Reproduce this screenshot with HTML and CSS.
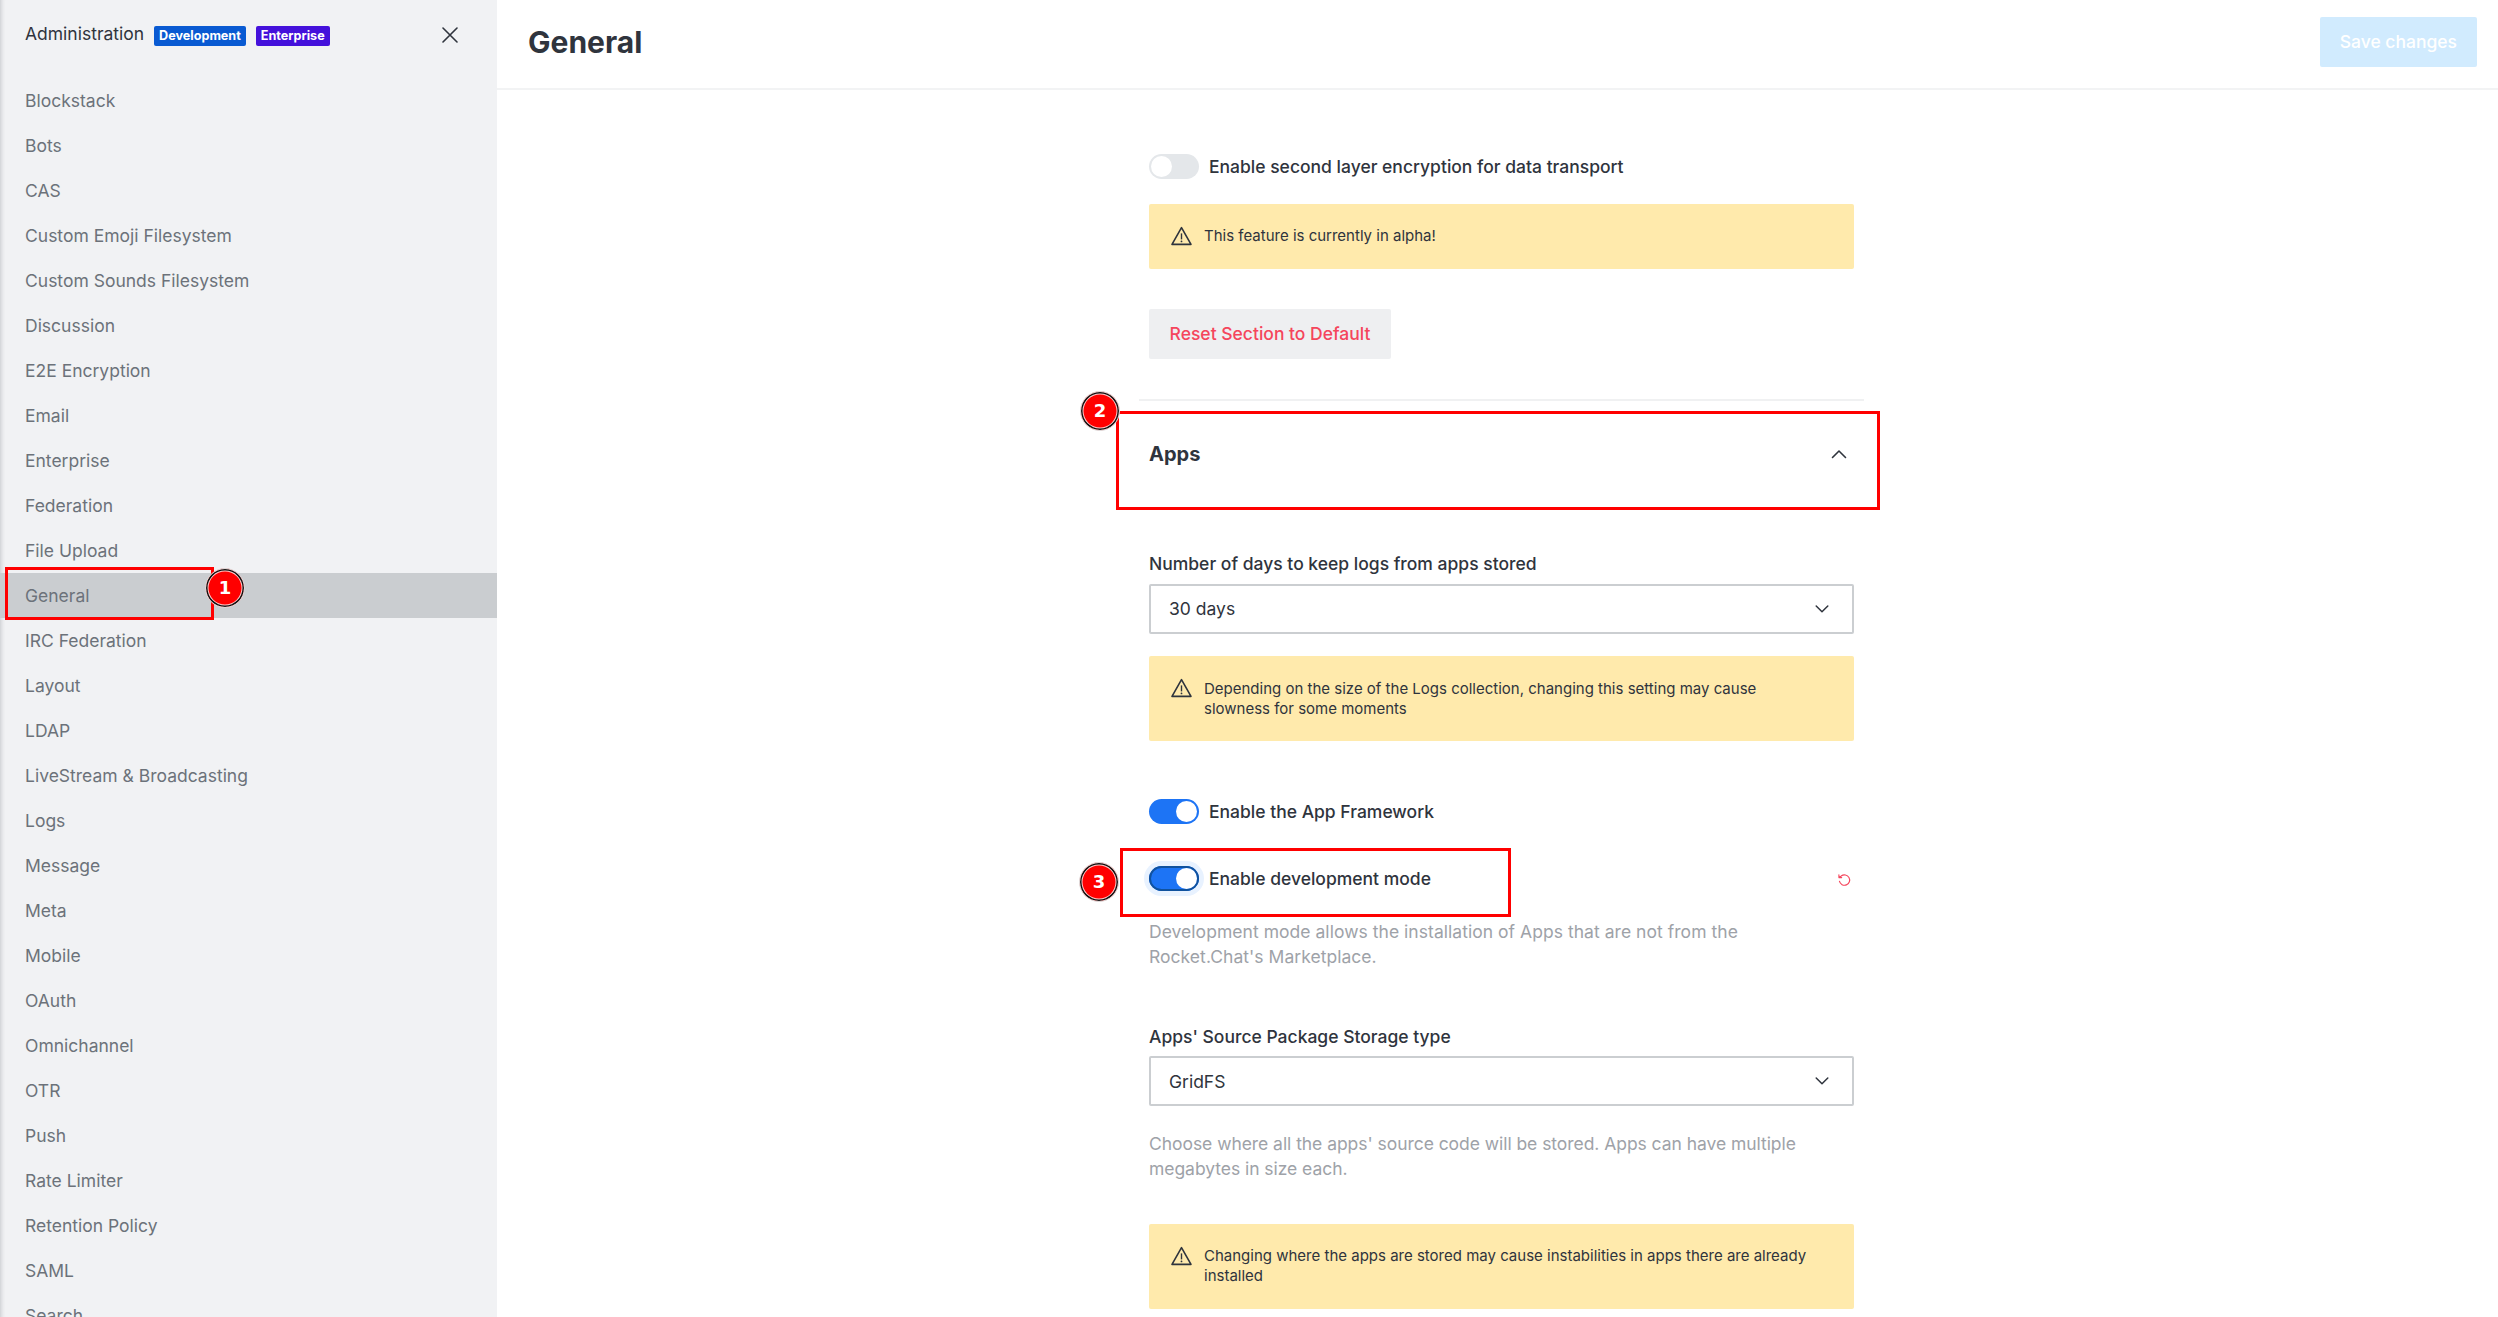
FILE: index.html
```html
<!DOCTYPE html>
<html lang="en">
<head>
<meta charset="utf-8">
<title>Administration - General</title>
<link rel="stylesheet" href="styles.css">
</head>
<body>
<svg class="defs" aria-hidden="true">
  <symbol id="warning" viewBox="0 0 25 25"><path d="M12.5 3.6 L22 20.4 H3 Z" fill="none" stroke="currentColor" stroke-width="1.6" stroke-linejoin="round"/><path d="M12.5 9.4 V15.4" fill="none" stroke="currentColor" stroke-width="1.4"/><circle cx="12.5" cy="17.4" r=".9" fill="currentColor"/></symbol>
  <symbol id="down" viewBox="0 0 16 10"><path d="M2.2 2 L8 7.8 L13.8 2" fill="none" stroke="currentColor" stroke-width="1.5" stroke-linecap="round" stroke-linejoin="round"/></symbol>
  <symbol id="up" viewBox="0 0 16 10"><path d="M1.5 8.5 L8 2 L14.5 8.5" fill="none" stroke="currentColor" stroke-width="1.6" stroke-linecap="round" stroke-linejoin="round"/></symbol>
</svg>
<div class="app">
  <aside class="sidebar">
    <header class="sidebar-head">
      <span class="sidebar-title">Administration</span>
      <span class="tag tag-dev">Development</span>
      <span class="tag tag-ent">Enterprise</span>
      <svg class="close" viewBox="0 0 16 16"><path d="M1 1 L15 15 M15 1 L1 15" fill="none" stroke="currentColor" stroke-width="1.6" stroke-linecap="round"/></svg>
    </header>
    <nav class="menu">
      <a>Blockstack</a><a>Bots</a><a>CAS</a><a>Custom Emoji Filesystem</a><a>Custom Sounds Filesystem</a><a>Discussion</a><a>E2E Encryption</a><a>Email</a><a>Enterprise</a><a>Federation</a><a>File Upload</a><a class="active">General</a><a>IRC Federation</a><a>Layout</a><a>LDAP</a><a>LiveStream &amp; Broadcasting</a><a>Logs</a><a>Message</a><a>Meta</a><a>Mobile</a><a>OAuth</a><a>Omnichannel</a><a>OTR</a><a>Push</a><a>Rate Limiter</a><a>Retention Policy</a><a>SAML</a><a>Search</a>
    </nav>
  </aside>
  <main class="main">
    <header class="page-head">
      <h1>General</h1>
      <button class="save">Save changes</button>
    </header>
    <div class="content">
      <div class="row"><span class="toggle"></span><span class="label">Enable second layer encryption for data transport</span></div>
      <div class="callout first"><svg class="warn"><use href="#warning"/></svg><p>This feature is currently in alpha!</p></div>
      <button class="reset">Reset Section to Default</button>
      <div class="section-head"><h2>Apps</h2><svg class="chevron"><use href="#up"/></svg></div>
      <div class="label">Number of days to keep logs from apps stored</div>
      <div class="select"><span>30 days</span><svg class="chevron"><use href="#down"/></svg></div>
      <div class="callout logs"><svg class="warn"><use href="#warning"/></svg><p>Depending on the size of the Logs collection, changing this setting may cause slowness for some moments</p></div>
      <div class="row framework"><span class="toggle on"></span><span class="label">Enable the App Framework</span></div>
      <div class="row devmode"><span class="toggle on focus"></span><span class="label">Enable development mode</span>
        <svg class="undo" viewBox="0 0 14 14"><path d="M1.9 1.8 V4.6 H4.7 M2.2 4.4 L4.2 3 A5.2 5.2 0 1 1 2.4 8.2" fill="none" stroke="currentColor" stroke-width="1.1" stroke-linecap="round" stroke-linejoin="round"/></svg>
      </div>
      <p class="hint">Development mode allows the installation of Apps that are not from the Rocket.Chat's Marketplace.</p>
      <div class="label storage">Apps' Source Package Storage type</div>
      <div class="select storage-select"><span>GridFS</span><svg class="chevron"><use href="#down"/></svg></div>
      <p class="hint choose">Choose where all the apps' source code will be stored. Apps can have multiple megabytes in size each.</p>
      <div class="callout last"><svg class="warn"><use href="#warning"/></svg><p>Changing where the apps are stored may cause instabilities in apps there are already installed</p></div>
    </div>
  </main>
  <div class="mark mark-1"></div><div class="pin pin-1">1</div>
  <div class="mark mark-2"></div><div class="pin pin-2">2</div>
  <div class="mark mark-3"></div><div class="pin pin-3">3</div>
</div>
</body>
</html>
```
FILE: styles.css
```css
* { box-sizing: border-box; }
body {
  margin: 0;
  font-family: Inter, "Liberation Sans", sans-serif;
  font-size: 17.5px;
  line-height: 25px;
  color: #2f343d;
  background: #fff;
}
h1, h2, p { margin: 0; }
button { font: inherit; font-weight: 500; border: 0; border-radius: 2px; height: 50px; padding: 0 20px; }
svg { display: block; flex: none; }
.defs { position: absolute; width: 0; height: 0; }
.app { position: relative; display: flex; height: 1317px; overflow: hidden; }

.sidebar { width: 497px; flex: none; background: #f1f2f4; box-shadow: inset 5px 0 4px -4px rgba(47, 52, 61, .22); }
.sidebar-head { display: flex; align-items: center; height: 78px; padding: 0 39px 8px 25px; }
.sidebar-title { margin-right: 10px; padding-bottom: 3px; }
.tag { height: 20px; margin: 2px 10px 0 0; padding: 0 5px; border-radius: 2px; font-size: 12.6px; line-height: 19px; font-weight: 700; color: #fff; }
.tag-dev { background: #095ad2; }
.tag-ent { background: #4411db; }
.close { width: 16px; height: 16px; margin-left: auto; margin-bottom: 1px; }
.menu a { display: block; height: 45px; padding: 0 25px; line-height: 45px; color: #6c727a; }
.menu .active { background: #cacdd0; }

.main { flex: 1; }
.page-head { display: flex; align-items: center; justify-content: space-between; height: 90px; padding: 0 21px 5px 31px; border-bottom: 2px solid #f2f3f4; }
h1 { font-size: 30px; line-height: 40px; font-weight: 700; }
.save { background: #d1ebfe; color: #fff; }

.content { width: 705px; margin: 64px 0 0 652px; }
.row { display: flex; align-items: center; height: 25px; gap: 10px; }
.label { font-weight: 500; }
.toggle { width: 50px; height: 25px; padding: 2px; border-radius: 13px; background: #e4e7ea; }
.toggle::before { content: ""; display: block; width: 21px; height: 21px; border-radius: 50%; background: #fff; }
.toggle.on { background: #1d74f5; }
.toggle.on::before { margin-left: auto; }
.toggle.focus { box-shadow: inset 0 0 0 2px #10529e, 0 0 0 5px #e8f2ff; }
.callout { display: flex; gap: 10px; padding: 22px 45px 23px 20px; border-radius: 2px; background: #ffeaac; font-size: 15px; line-height: 20px; }
.callout p { flex: 1; }
.warn { width: 25px; height: 25px; margin-top: -2px; margin-bottom: -3px; }
.first { margin-top: 25px; }
.reset { display: block; width: 242px; margin-top: 40px; padding-bottom: 2px; color: #f5455c; background: #eeeff1; }
.section-head { display: flex; justify-content: space-between; height: 152px; margin: 40px -10px 0; padding: 41px 17px 0 10px; border-top: 2px solid #f0f1f2; }
h2 { font-size: 20px; line-height: 25px; font-weight: 700; }
.chevron { width: 16px; height: 10px; }
.section-head .chevron { margin-top: 7px; }
.select { display: flex; align-items: center; justify-content: space-between; height: 50px; margin-top: 8px; padding: 0 22px 0 18px; border: 2px solid #cbced1; border-radius: 2px; }
.select span { padding-bottom: 2px; }
.storage-select { margin-top: 7px; }
.storage-select span { padding-bottom: 0; }
.logs { margin-top: 22px; }
.logs p { padding-top: 1px; margin-bottom: -1px; }
.framework { margin-top: 58px; }
.devmode { margin-top: 42px; }
.undo { width: 14px; height: 14px; margin: 2px 3px 0 auto; color: #f5455c; }
.hint { padding-right: 45px; margin-top: 28px; color: #9ea2a8; letter-spacing: .04px; }
.storage { margin-top: 55px; }
.choose { margin-top: 25px; letter-spacing: -.05px; }
.last { margin-top: 43px; }

/* numbered callouts drawn over the page */
.mark { position: absolute; border: 3px solid #f00; }
.mark-1 { left: 5px; top: 567px; width: 209px; height: 53px; }
.mark-2 { left: 1116px; top: 411px; width: 764px; height: 99px; }
.mark-3 { left: 1120px; top: 848px; width: 391px; height: 69px; }
.pin { position: absolute; width: 40px; height: 40px; border: 1px solid #ddd; border-radius: 50%; background: #f00; box-shadow: inset 0 0 0 1.5px #111, inset 0 0 0 2.5px #fcc; color: #fff; font: bold 18px/38px "DejaVu Sans", sans-serif; text-align: center; }
.pin-1 { left: 205px; top: 568px; }
.pin-2 { left: 1080px; top: 391px; }
.pin-3 { left: 1079px; top: 862px; }
```
